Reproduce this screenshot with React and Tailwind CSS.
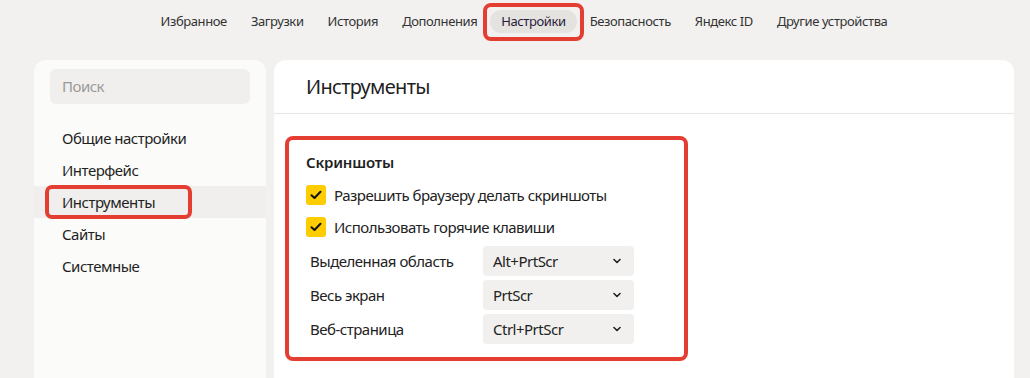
import React from "react";

const FONT = { fontFamily: '"Noto Sans", "Open Sans", sans-serif' };

const navItems = [
  "Избранное",
  "Загрузки",
  "История",
  "Дополнения",
  "Настройки",
  "Безопасность",
  "Яндекс ID",
  "Другие устройства",
];

const sideItems = ["Общие настройки", "Интерфейс", "Инструменты", "Сайты", "Системные"];

function Check() {
  return (
    <span className="flex h-[20px] w-[20px] shrink-0 items-center justify-center rounded-[3px] bg-[#ffcc00]">
      <svg width="12" height="10" viewBox="0 0 12 10" fill="none">
        <path d="M1.5 5.2 L4.5 8 L10.5 1.8" stroke="#111" strokeWidth="2" strokeLinecap="round" strokeLinejoin="round" />
      </svg>
    </span>
  );
}

function Select({ label, value }) {
  return (
    <div className="flex h-[30px] items-center tracking-[-0.5px]">
      <span className="w-[177px] pl-[4px] text-[15px] text-[#222]">{label}</span>
      <div className="flex h-[30px] w-[151px] items-center justify-between rounded-[4px] bg-[#f1f0ee] pl-[10px] pr-[13px] text-[15px] text-[#222]">
        <span>{value}</span>
        <svg width="8" height="6" viewBox="0 0 8 6" fill="none">
          <path d="M1 1.5 L4 4.5 L7 1.5" stroke="#222" strokeWidth="1.6" strokeLinecap="round" strokeLinejoin="round" />
        </svg>
      </div>
    </div>
  );
}

export default function App() {
  return (
    <div style={FONT} className="h-[378px] w-[1030px] overflow-hidden bg-[#f2f1ef] pl-[34px] pr-[16px]">
      <nav className="flex h-[42px] items-center justify-center gap-[2px] pt-[1px] text-[13px] tracking-[-0.4px] text-[#333]">
        {navItems.map((t) =>
          t === "Настройки" ? (
            <span key={t} className="relative rounded-[12px] bg-[#e4e3e0] px-[11px] py-[2px] text-[#2a1b3d]">
              {t}
              <span className="absolute -bottom-[8px] -left-[7px] -right-[7px] -top-[7px] rounded-[8px] border-4 border-[#e43e32]" />
            </span>
          ) : (
            <span key={t} className="px-[11px] py-[2px]">
              {t}
            </span>
          )
        )}
      </nav>

      <div className="mt-[18px] flex gap-[8px]">
        <aside className="h-[400px] w-[232px] shrink-0 rounded-[12px] bg-[#fbfbfa] pt-[9px] tracking-[-0.5px]">
          <div className="mx-[16px] flex h-[35px] items-center rounded-[6px] bg-[#f0efed] pl-[12px] text-[15px] text-[#9a9a9a]">
            Поиск
          </div>
          <ul className="mt-[18px]">
            {sideItems.map((t) => (
              <li
                key={t}
                className={
                  "relative flex h-[32px] items-center pl-[28px] text-[15px] text-[#1f1f1f] " +
                  (t === "Инструменты" ? "bg-[#f0efed]" : "")
                }
              >
                {t}
                {t === "Инструменты" && (
                  <span className="absolute -bottom-[1px] -top-[1px] left-[11px] w-[147px] rounded-[7px] border-4 border-[#e43e32]" />
                )}
              </li>
            ))}
          </ul>
        </aside>

        <main className="h-[400px] flex-1 rounded-[12px] bg-white">
          <div className="flex h-[54px] items-center border-b border-[#e6e5e3] pl-[32px] text-[20px] tracking-[-0.7px] text-[#1f1f1f]">
            Инструменты
          </div>
          <section className="ml-[11px] mt-[22px] w-[403px] rounded-[8px] border-4 border-[#e43e32] px-[17px] pb-[13px] pt-[12px]">
            <div className="text-[15px] font-semibold leading-[20px] tracking-[-0.2px] text-[#1f1f1f]">Скриншоты</div>
            <div className="mt-[7px] tracking-[-0.5px]">
              <label className="flex h-[32px] items-center gap-[8px] text-[15px] text-[#222]">
                <Check />
                Разрешить браузеру делать скриншоты
              </label>
              <label className="flex h-[32px] items-center gap-[8px] text-[15px] text-[#222]">
                <Check />
                Использовать горячие клавиши
              </label>
            </div>
            <div className="mt-[3px] flex flex-col gap-[4px]">
              <Select label="Выделенная область" value="Alt+PrtScr" />
              <Select label="Весь экран" value="PrtScr" />
              <Select label="Веб-страница" value="Ctrl+PrtScr" />
            </div>
          </section>
        </main>
      </div>
    </div>
  );
}
